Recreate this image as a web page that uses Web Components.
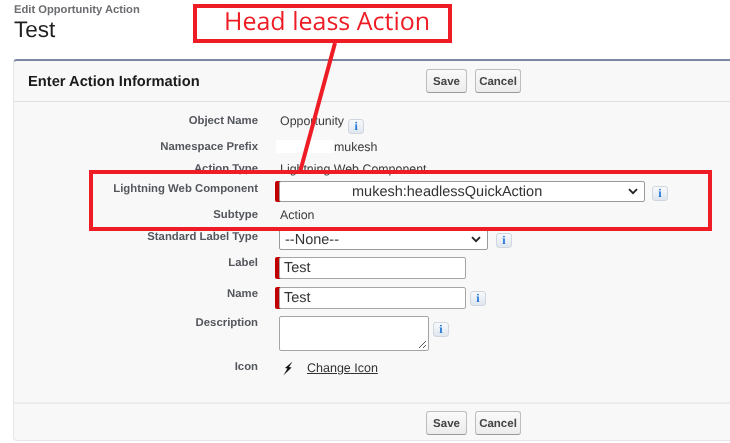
<!DOCTYPE html>
<html lang="en">
<head>
<meta charset="utf-8">
<title>Edit Opportunity Action</title>
<style>
  html, body { margin: 0; background: #fff; }
  body { width: 730px; height: 443px; overflow: hidden; position: relative; font-family: "Liberation Sans", Arial, sans-serif; filter: blur(0.4px); text-rendering: geometricPrecision; }
</style>
</head>
<body>
<page-header type="Edit Opportunity Action" name="Test"></page-header>

<action-panel title="Enter Action Information">
  <form-row label="Object Name" style="--h:26px">
    <field-text>Opportunity</field-text>
    <info-btn style="margin:7px 0 0 4px"></info-btn>
  </form-row>
  <form-row label="Namespace Prefix" style="--h:22px">
    <field-text><span style="display:inline-block;width:58px;height:13px;background:#fff;margin:0 0 0 -4px;vertical-align:-2px"></span>mukesh</field-text>
  </form-row>
  <form-row label="Action Type" style="--h:20px">
    <field-text>Lightning Web Component</field-text>
  </form-row>
  <form-row label="Lightning Web Component" style="--h:26px">
    <pick-list required width="366" indent="72" style="margin-top:1px">mukesh:headlessQuickAction</pick-list>
    <info-btn style="margin:6px 0 0 7px"></info-btn>
  </form-row>
  <form-row label="Subtype" style="--h:22px">
    <field-text>Action</field-text>
  </form-row>
  <form-row label="Standard Label Type" style="--h:26px">
    <pick-list width="209" indent="5" style="margin-top:1px">--None--</pick-list>
    <info-btn style="margin:5px 0 0 8px"></info-btn>
  </form-row>
  <form-row label="Label" style="--h:31px">
    <text-box required width="187" height="22" style="margin-top:3px">Test</text-box>
  </form-row>
  <form-row label="Name" style="--h:29px">
    <text-box required width="187" height="22" style="margin-top:2px">Test</text-box>
    <info-btn style="margin:6px 0 0 4px"></info-btn>
  </form-row>
  <form-row label="Description" style="--h:44px">
    <text-box multi width="150" height="35" style="margin-top:2px"></text-box>
    <info-btn style="margin:8px 0 0 4px"></info-btn>
  </form-row>
  <form-row label="Icon" style="--h:44px">
    <icon-picker>Change Icon</icon-picker>
  </form-row>
</action-panel>

<red-callout text="Head leass Action"></red-callout>

<script>
class PageHeader extends HTMLElement {
  constructor() {
    super();
    this.attachShadow({mode: 'open'});
    this.shadowRoot.innerHTML = `
      <style>
        :host { display: block; height: 59px; padding-left: 14px; box-sizing: border-box; padding-top: 4px; }
        .type { font: bold 11.2px/13px "Liberation Sans", Arial, sans-serif; color: #6b6d70; }
        .name { font: 22.5px/26px "Liberation Sans", Arial, sans-serif; color: #1f1f1f; }
      </style>
      <div class="type">${this.getAttribute('type')}</div>
      <div class="name">${this.getAttribute('name')}</div>`;
  }
}
customElements.define('page-header', PageHeader);

class SfButton extends HTMLElement {
  constructor() {
    super();
    this.attachShadow({mode: 'open'});
    this.shadowRoot.innerHTML = `
      <style>
        :host {
          display: block; box-sizing: border-box; height: 24px;
          border: 1px solid #bdbdbd; border-bottom-color: #9a9a9a; border-radius: 3px;
          background: linear-gradient(#fafafa, #ececec);
          font: bold 11.5px/24px "Liberation Sans", Arial, sans-serif; color: #444;
          text-align: center;
        }
      </style>
      <slot></slot>`;
  }
}
customElements.define('sf-button', SfButton);

class ButtonBar extends HTMLElement {
  constructor() {
    super();
    this.attachShadow({mode: 'open'});
    this.shadowRoot.innerHTML = `
      <style>
        :host { display: flex; gap: 8px; }
        sf-button:first-of-type { width: 41px; }
        sf-button:last-of-type { width: 46px; }
      </style>
      <sf-button>Save</sf-button><sf-button>Cancel</sf-button>`;
  }
}
customElements.define('button-bar', ButtonBar);

class ActionPanel extends HTMLElement {
  constructor() {
    super();
    this.attachShadow({mode: 'open'});
    this.shadowRoot.innerHTML = `
      <style>
        :host {
          display: block; box-sizing: border-box; margin-left: 13px; height: 382px;
          border-top: 2px solid #7b87a5; border-left: 1px solid #e6e6e6; border-bottom: 1px solid #e6e6e6;
          border-radius: 4px 0 0 4px; background: #f8f8f8;
        }
        .head { display: flex; align-items: center; height: 40px; border-bottom: 1px solid #dfdfdf; padding-left: 14px; }
        .head h2 { margin: 0; width: 398px; padding-top: 1px; font: bold 14.7px/18px "Liberation Sans", Arial, sans-serif; color: #1b1b1b; }
        .body { padding-top: 10px; height: 300px; box-sizing: border-box; }
        .foot { display: flex; border-top: 2px solid #ececec; padding: 7px 0 0 412px; }
      </style>
      <div class="head"><h2>${this.getAttribute('title')}</h2><button-bar></button-bar></div>
      <div class="body"><slot></slot></div>
      <div class="foot"><button-bar></button-bar></div>`;
    this.removeAttribute('title');
  }
}
customElements.define('action-panel', ActionPanel);

class FormRow extends HTMLElement {
  constructor() {
    super();
    this.attachShadow({mode: 'open'});
    this.shadowRoot.innerHTML = `
      <style>
        :host { display: flex; height: var(--h, 24px); }
        .label {
          width: 244px; flex: none; text-align: right; padding-top: 1px;
          font: bold 11.35px/16px "Liberation Sans", Arial, sans-serif; color: #53565c;
        }
        .value { display: flex; align-items: flex-start; margin-left: 21px; }
      </style>
      <div class="label">${this.getAttribute('label')}</div>
      <div class="value"><slot></slot></div>`;
  }
}
customElements.define('form-row', FormRow);

class FieldText extends HTMLElement {
  constructor() {
    super();
    this.attachShadow({mode: 'open'});
    this.shadowRoot.innerHTML = `
      <style>
        :host { display: block; margin: 1px 0 0 1px; font: 12.4px/16px "Liberation Sans", Arial, sans-serif; color: #3a3a3a; white-space: nowrap; }
      </style>
      <slot></slot>`;
  }
}
customElements.define('field-text', FieldText);

class InfoBtn extends HTMLElement {
  constructor() {
    super();
    this.attachShadow({mode: 'open'});
    this.shadowRoot.innerHTML = `
      <style>
        :host {
          display: block; box-sizing: border-box; width: 16px; height: 15px; flex: none;
          border: 1px solid #cfd6de; border-radius: 3px; background: linear-gradient(#f8fafc, #dfe6ee);
          font: bold 12px/13px "Liberation Serif", serif; color: #2176d8; text-align: center;
        }
      </style>i`;
  }
}
customElements.define('info-btn', InfoBtn);

class PickList extends HTMLElement {
  constructor() {
    super();
    this.attachShadow({mode: 'open'});
    const w = this.getAttribute('width');
    const bar = this.hasAttribute('required') ? 'box-shadow: -4px 0 0 #c00000;' : '';
    this.shadowRoot.innerHTML = `
      <style>
        :host {
          display: flex; align-items: center; justify-content: space-between; box-sizing: border-box; flex: none;
          width: ${w}px; height: 21px; padding: 0 6px 0 ${this.getAttribute('indent')}px;
          background: #fff; border: 1px solid #9a9a9a; border-radius: 2px; ${bar}
          font: 14.5px/19px "Liberation Sans", Arial, sans-serif; color: #333;
        }
        span { padding-top: 1px; }
        svg { display: block; }
      </style>
      <span><slot></slot></span>
      <svg width="10" height="7" viewBox="0 0 10 7"><path d="M1 1.2 5 5.2 9 1.2" fill="none" stroke="#222" stroke-width="1.8"/></svg>`;
  }
}
customElements.define('pick-list', PickList);

class TextBox extends HTMLElement {
  constructor() {
    super();
    this.attachShadow({mode: 'open'});
    const bar = this.hasAttribute('required') ? 'box-shadow: -4px 0 0 #c00000;' : '';
    const grip = this.hasAttribute('multi')
      ? '<svg width="9" height="9" viewBox="0 0 9 9"><path d="M8 1 1 8M8 5 5 8" stroke="#555" fill="none"/></svg>' : '';
    this.shadowRoot.innerHTML = `
      <style>
        :host {
          display: block; position: relative; box-sizing: border-box; flex: none;
          width: ${this.getAttribute('width')}px; height: ${this.getAttribute('height')}px; padding: 1px 0 0 4px;
          background: #fff; border: 1px solid #a5a5a5; border-radius: 2px; ${bar}
          font: 14.5px/19px "Liberation Sans", Arial, sans-serif; color: #333;
        }
        svg { position: absolute; right: 1px; bottom: 1px; }
      </style>
      <slot></slot>${grip}`;
  }
}
customElements.define('text-box', TextBox);

class IconPicker extends HTMLElement {
  constructor() {
    super();
    this.attachShadow({mode: 'open'});
    this.shadowRoot.innerHTML = `
      <style>
        :host { display: flex; align-items: center; gap: 14px; margin: 2px 0 0 4px; font: 12.5px/16px "Liberation Sans", Arial, sans-serif; color: #333; }
        a { color: inherit; text-decoration: underline; }
        svg { display: block; }
      </style>
      <svg width="10" height="15" viewBox="0 0 10 15"><path d="M9.6 0.5 2 7 4.4 7.6 0.4 14.5 8.6 6.6 6 6Z" fill="#151515"/></svg>
      <a><slot></slot></a>`;
  }
}
customElements.define('icon-picker', IconPicker);

// red annotation drawn on top of the screenshot
class RedCallout extends HTMLElement {
  constructor() {
    super();
    this.attachShadow({mode: 'open'});
    this.shadowRoot.innerHTML = `
      <style>
        :host { position: absolute; inset: 0; display: block; pointer-events: none; }
        .title {
          position: absolute; left: 193px; top: 4px; width: 259px; height: 39px; box-sizing: border-box;
          border: 4px solid #ee1c25; padding-left: 27px; background: #fff;
          font: 25px/26px "Open Sans", sans-serif; color: #ee1c25; white-space: nowrap;
        }
        .frame { position: absolute; left: 89px; top: 170px; width: 623px; height: 61px; box-sizing: border-box; border: 4px solid #ee1c25; }
        svg { position: absolute; left: 0; top: 0; }
      </style>
      <svg width="730" height="443"><path d="M335 43 300 172" stroke="#ee1c25" stroke-width="4" fill="none"/></svg>
      <div class="title">${this.getAttribute('text')}</div>
      <div class="frame"></div>`;
  }
}
customElements.define('red-callout', RedCallout);
</script>
</body>
</html>
